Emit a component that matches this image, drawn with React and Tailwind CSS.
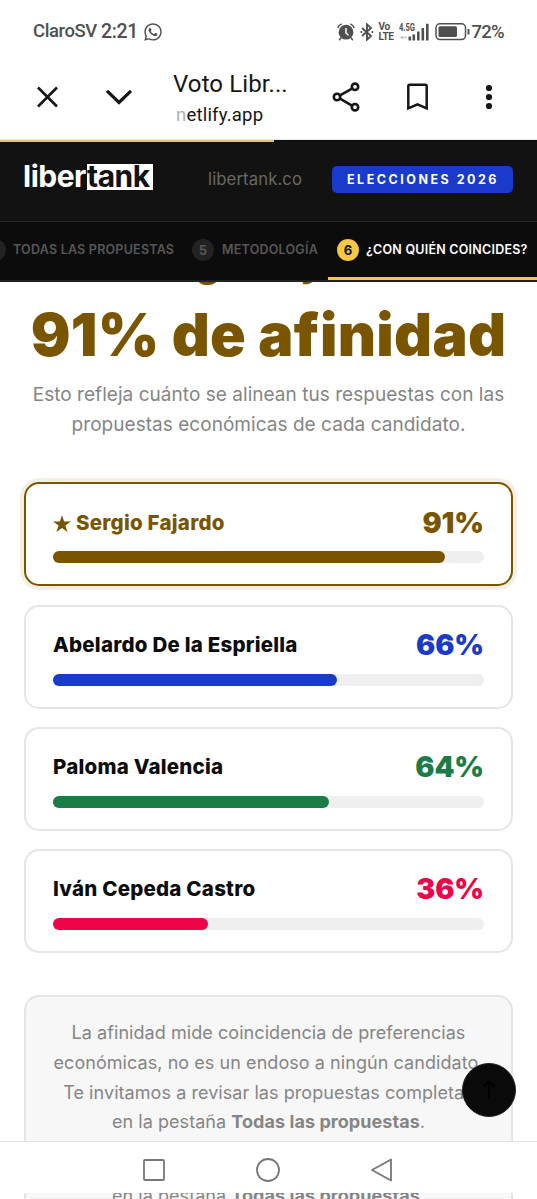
import { FaWhatsapp } from 'react-icons/fa';

const candidates = [
  { name: 'Sergio Fajardo', pct: 91, text: 'text-[#7a5500]', bar: 'bg-[#7a5500]', winner: true },
  { name: 'Abelardo De la Espriella', pct: 66, text: 'text-[#1a3acb]', bar: 'bg-[#1a3acb]' },
  { name: 'Paloma Valencia', pct: 64, text: 'text-[#1c7c46]', bar: 'bg-[#1c7c46]' },
  { name: 'Iván Cepeda Castro', pct: 36, text: 'text-[#ee0449]', bar: 'bg-[#ee0449]' },
];

function StatusBar() {
  return (
    <div className="flex h-[60px] items-center pl-[33px] pr-[33px] pt-[3px] font-[Roboto,sans-serif] font-medium text-[#505050]">
      <span className="text-[18.5px] tracking-[-0.4px]">ClaroSV</span>
      <span className="ml-[4px] text-[19.5px] tracking-[-0.3px]">2:21</span>
      <FaWhatsapp className="ml-[5px] h-5 w-5" />

      <div className="ml-auto flex items-center">
        {/* Alarm */}
        <svg className="h-[18px] w-[18px]" viewBox="0 0 18 18" fill="none" stroke="currentColor">
          <circle cx="9" cy="9.2" r="7.4" fill="currentColor" stroke="none" />
          <path d="M.8 5A6 6 0 0 1 4.8 .9M17.2 5a6 6 0 0 0-4-4.1M4 14.8l-1.8 2.4M14 14.8l1.8 2.4" strokeWidth="1.5" />
          <path d="M9 5v5l2.6 2.4" stroke="white" strokeWidth="1.5" />
        </svg>
        {/* Bluetooth */}
        <svg className="ml-[5px] h-[18px] w-[14px]" viewBox="0 0 14 18" fill="none" stroke="currentColor" strokeWidth="1.9">
          <path d="M2 5l9 8-4 3.6V1.4L11 5l-9 8" />
          <path d="M.6 9h1.6M11.6 9h1.6" />
        </svg>
        <div className="ml-[4px] w-[18px] text-[10px] leading-[9.5px] font-bold tracking-[-0.3px]">
          <div>Vo</div>
          <div>LTE</div>
        </div>
        {/* Signal strength */}
        <svg className="ml-[3px] h-[18px] w-[31px]" viewBox="0 0 31 18" fill="currentColor">
          <text x="0" y="8.4" fontSize="11" fontWeight="700" textLength="16" lengthAdjust="spacingAndGlyphs">4.5G</text>
          <path d="M9.5 13.5h2.6v4H9.5zM13.5 11.5h2.6v6h-2.6zM18 8.5h2.6v9H18zM22.5 5h2.6v12.5h-2.6zM27 .8h2.6v16.7H27z" />
          <path d="M1 14.5l2.5-2v1.2h2v1.6h-2v1.2zM8 14.5l-2-1.7v3.4z" opacity=".35" />
        </svg>
        {/* Battery */}
        <svg className="ml-[5px] h-[18px] w-[36px]" viewBox="0 0 36 18" fill="none">
          <rect x="1" y=".8" width="29.5" height="15.8" rx="4" stroke="currentColor" strokeWidth="1.5" />
          <rect x="3.5" y="3.3" width="18.5" height="10.8" rx="1.5" fill="currentColor" />
          <path d="M33.5 6v5.5" stroke="currentColor" strokeWidth="2" />
        </svg>
        <span className="text-[18.5px] font-medium tracking-[-0.7px] leading-5">72%</span>
      </div>
    </div>
  );
}

function BrowserBar() {
  return (
    <div className="flex h-[80px] items-center pl-[35px] pr-[36px] text-[#161616] border-b border-[#e8e8e8]">
      <svg className="mt-[-6px] h-6 w-6" viewBox="0 0 24 24" fill="none" stroke="currentColor" strokeWidth="2.6">
        <path d="M3 2.5l19 19M22 2.5l-19 19" />
      </svg>
      <svg className="mt-[-6px] ml-[46px] h-6 w-[28px]" viewBox="0 0 28 24" fill="none" stroke="currentColor" strokeWidth="3.2">
        <path d="M2 5.8l12 11.6L26 5.8" />
      </svg>
      <div className="mt-[-1px] ml-[40px] w-[120px] font-[Roboto,sans-serif] whitespace-nowrap">
        <div className="text-[24px] leading-[32px] tracking-[0.1px]">Voto Libr...</div>
        <div className="pl-[3px] text-[18.5px] leading-[31px] tracking-[0.2px]">
          <span className="text-[#b0b0b0]">n</span>etlify.app
        </div>
      </div>
      <svg className="mt-[-6px] ml-[38px] h-[32px] w-[30px]" viewBox="0 0 30 32" fill="none" stroke="currentColor" strokeWidth="2.6">
        <circle cx="24" cy="5.8" r="3.2" />
        <circle cx="6" cy="16" r="3.2" />
        <circle cx="24" cy="26.2" r="3.2" />
        <path d="M9 14.4l12-6.8M9 17.7l12 7" />
      </svg>
      <svg className="mt-[-6px] ml-[45px] h-[28px] w-[22px]" viewBox="0 0 22 28" fill="none" stroke="currentColor" strokeWidth="2.5">
        <path d="M2.3 25.3V3.2q0-1.4 1.4-1.4h15.6q1.4 0 1.4 1.4v22.1L11.5 21.3z" />
      </svg>
      <svg className="mt-[-6px] ml-auto h-[26px] w-[24px]" viewBox="0 0 24 26" fill="currentColor">
        <circle cx="12" cy="4" r="3.1" />
        <circle cx="12" cy="13" r="3.1" />
        <circle cx="12" cy="22" r="3.1" />
      </svg>
    </div>
  );
}

function SiteHeader() {
  return (
    <header className="h-[142px] bg-[#0c0c0c]">
      <div className="h-[2px] bg-[#111]">
        <div className="h-full w-[274px] bg-[#e0c468]" />
      </div>
      <div className="flex h-[80px] items-center bg-[#121212] border-b border-[#262626] pl-[23px]">
        <div className="-mt-[9px] flex w-[131px] text-[30px] leading-[24px] font-bold text-white tracking-[-0.5px] whitespace-nowrap">
          <span className="w-[64px]">liber</span>
          <span className="h-[26px] w-[66px] bg-white text-[#121212]">tank</span>
        </div>
        <span className="-mt-[4px] ml-[54px] w-[94px] text-[16.7px] tracking-[0.1px] text-[#686868] whitespace-nowrap">libertank.co</span>
        <span className="-mt-[4px] ml-[30px] h-[27px] w-[181px] rounded-[5px] bg-[#1a3acb] pl-[1px] text-center text-[12.5px] leading-[27px] font-bold text-white tracking-[2.5px] whitespace-nowrap">
          ELECCIONES 2026
        </span>
      </div>
      <nav className="flex h-[60px] border-b-2 border-[#222] text-[12.5px] font-semibold text-[#575757] tracking-[0.23px] whitespace-nowrap overflow-hidden">
        <div className="flex w-[184px] items-center pb-[2px]">
          <span className="-ml-[16px] h-[22px] w-[22px] shrink-0 rounded-full bg-[#222]" />
          <span className="ml-[7px]">TODAS LAS PROPUESTAS</span>
        </div>
        <div className="flex w-[144px] items-center pb-[2px] pl-[8px]">
          <span className="h-[22px] w-[22px] shrink-0 rounded-full bg-[#222] text-center text-[13px] leading-[22px] font-bold">5</span>
          <span className="ml-[8px]">METODOLOGÍA</span>
        </div>
        <div className="flex flex-1 items-center border-b-3 border-[#f5c842] pl-[9px] pt-[1px] text-white">
          <span className="h-[22px] w-[22px] shrink-0 rounded-full bg-[#f5c842] text-center text-[13px] leading-[22px] font-bold text-[#111]">6</span>
          <span className="ml-[7px]">¿CON QUIÉN COINCIDES?</span>
        </div>
      </nav>
    </header>
  );
}

function CandidateCard({ name, pct, text, bar, winner }) {
  return (
    <div
      className={`h-[104px] rounded-[15px] border-2 px-[27px] ${
        winner ? 'border-[#7a5500] shadow-[0_0_0_4px_#f4efe4]' : 'border-[#e5e5e5]'
      }`}
    >
      <div className="flex h-[67px] items-center justify-between pt-[10.6px]">
        <span className={`flex items-center text-[20.5px] font-extrabold tracking-[0.23px] whitespace-nowrap ${winner ? text : 'text-[#0c0c0c]'}`}>
          {winner && (
            <svg className="mt-[1px] mr-[5px] h-[17px] w-[18px]" viewBox="0 0 18 17" fill="currentColor">
              <path d="M9 0l2.1 6.4H18l-5.6 4 2.2 6.6L9 12.9 3.4 17l2.2-6.6L0 6.4h6.9z" />
            </svg>
          )}
          {name}
        </span>
        <span className={`text-[28.5px] font-black tracking-[-0.1px] ${text}`}>{pct}%</span>
      </div>
      <div className="h-[12px] rounded-full bg-[#efefef]">
        <div className={`h-full rounded-full ${bar}`} style={{ width: `${pct}%` }} />
      </div>
    </div>
  );
}

function SystemNav() {
  return (
    <div className="flex h-[52px] items-center justify-center gap-[90px] border-t border-[#e2e2e2] bg-white pt-[5px] pr-[2px] text-[#777]">
      <svg className="h-6 w-6" viewBox="0 0 24 24" fill="none" stroke="currentColor" strokeWidth="1.8">
        <rect x="2" y="2" width="20" height="20" rx="1" />
      </svg>
      <svg className="h-6 w-6" viewBox="0 0 24 24" fill="none" stroke="currentColor" strokeWidth="1.8">
        <circle cx="12" cy="12" r="11" />
      </svg>
      <svg className="h-6 w-6" viewBox="0 0 24 24" fill="none" stroke="currentColor" strokeWidth="1.8" strokeLinejoin="round">
        <path d="M21 1.5v21L2 12z" />
      </svg>
    </div>
  );
}

function TabHint() {
  return (
    <div>
      en la pestaña <strong className="font-bold">Todas las propuestas</strong>.
    </div>
  );
}

export default function App() {
  return (
    <div className="h-[1199px] w-[537px] overflow-hidden bg-white font-[Inter,sans-serif]">
      <StatusBar />
      <BrowserBar />
      <SiteHeader />

      {/* Scrolled results */}
      <main className="relative h-[859px] overflow-hidden px-[24px]">
        <div className="-mt-[41px] text-center font-black text-[#7a5500] whitespace-nowrap">
          <div className="mr-[4px] text-[37px] leading-[46px] tracking-[-0.1px]">Sergio Fajardo</div>
          <h1 className="-mx-[10px] mt-[13px] text-[59px] leading-[70px] tracking-[0.3px]">91% de afinidad</h1>
        </div>
        <p className="mt-[10px] text-center text-[19px] leading-[30px] tracking-[0.04px] text-[#858585] whitespace-nowrap">
          Esto refleja cuánto se alinean tus respuestas con las
          <br />
          propuestas económicas de cada candidato.
        </p>

        <div className="mt-[42.4px] flex flex-col gap-[18.2px]">
          {candidates.map((c) => (
            <CandidateCard key={c.name} {...c} />
          ))}
        </div>

        <div className="mt-[42px] h-[200px] rounded-[15px] border-2 border-[#e5e5e5] bg-[#f7f7f7] pt-[21px] text-center text-[18px] leading-[29.8px] tracking-[0.06px] text-[#858585] whitespace-nowrap">
          <div>La afinidad mide coincidencia de preferencias</div>
          <div>económicas, no es un endoso a ningún candidato.</div>
          <div>Te invitamos a revisar las propuestas completas</div>
          <TabHint />
        </div>

        {/* Back to top */}
        <button className="absolute right-[21px] bottom-[24px] flex h-[54px] w-[54px] items-center justify-center rounded-full bg-[#0a0a0a] border border-[#222]">
          <svg className="h-5 w-5" viewBox="0 0 20 20" fill="none" stroke="#000" strokeWidth="2">
            <path d="M10 19V1.5M5 6.5l5-5 5 5" />
          </svg>
        </button>
      </main>

      <SystemNav />

      {/* Page showing below the system bar */}
      <div className="flex h-[6px] flex-col overflow-hidden px-[24px]">
        <div className="h-[40px] shrink-0 border-x-2 border-[#e5e5e5] bg-[#f7f7f7] text-center text-[18px] leading-[30px] tracking-[0.06px] text-[#858585] whitespace-nowrap">
          <div className="-mt-[12px]">
            <TabHint />
          </div>
        </div>
      </div>
    </div>
  );
}
